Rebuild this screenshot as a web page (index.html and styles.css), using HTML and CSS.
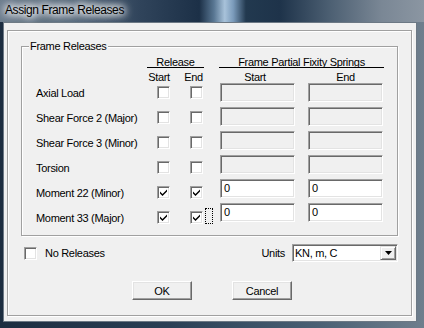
FILE: index.html
```html
<!DOCTYPE html>
<html>
<head>
  <title>Assign Frame Releases</title>
  <link rel="stylesheet" href="styles.css">
</head>
<body>
  <div class="window">
    <div class="titlebar"><span class="title">Assign Frame Releases</span></div>
    <div class="client">
      <div class="panel">
        <div class="group">
          <span class="group-label">Frame Releases</span>
          <div class="releases">
            <div class="hdr hdr-release">Release</div>
            <div class="subhdr"><span class="sub-start">Start</span><span class="sub-end">End</span></div>
            <div class="row"><span class="lbl">Axial Load</span><span class="cb"></span><span class="cb"></span></div>
            <div class="row"><span class="lbl">Shear Force 2 (Major)</span><span class="cb"></span><span class="cb"></span></div>
            <div class="row"><span class="lbl">Shear Force 3 (Minor)</span><span class="cb"></span><span class="cb"></span></div>
            <div class="row"><span class="lbl">Torsion</span><span class="cb"></span><span class="cb"></span></div>
            <div class="row">
              <span class="lbl">Moment 22 (Minor)</span>
              <span class="cb"><svg width="7" height="7" viewBox="0 0 7 7"><path d="M0 2.5 L2.5 5 L7 0.5 L7 2.5 L2.5 7 L0 4.5 Z" fill="#000"/></svg></span>
              <span class="cb"><svg width="7" height="7" viewBox="0 0 7 7"><path d="M0 2.5 L2.5 5 L7 0.5 L7 2.5 L2.5 7 L0 4.5 Z" fill="#000"/></svg></span>
            </div>
            <div class="row">
              <span class="lbl">Moment 33 (Major)</span>
              <span class="cb"><svg width="7" height="7" viewBox="0 0 7 7"><path d="M0 2.5 L2.5 5 L7 0.5 L7 2.5 L2.5 7 L0 4.5 Z" fill="#000"/></svg></span>
              <span class="cb-wrap">
                <span class="cb"><svg width="7" height="7" viewBox="0 0 7 7"><path d="M0 2.5 L2.5 5 L7 0.5 L7 2.5 L2.5 7 L0 4.5 Z" fill="#000"/></svg></span>
                <span class="focus"></span>
              </span>
            </div>
          </div>
          <div class="springs">
            <div class="hdr hdr-springs">Frame Partial Fixity Springs</div>
            <div class="subhdr"><span class="sub-s1">Start</span><span class="sub-s2">End</span></div>
            <div class="boxes">
              <span class="tb"></span><span class="tb"></span>
              <span class="tb"></span><span class="tb"></span>
              <span class="tb"></span><span class="tb"></span>
              <span class="tb"></span><span class="tb"></span>
              <span class="tb on">0</span><span class="tb on">0</span>
              <span class="tb on">0</span><span class="tb on">0</span>
            </div>
          </div>
        </div>
        <div class="options">
          <span class="cb"></span>
          <span class="opt-label">No Releases</span>
          <span class="units">Units</span>
          <div class="combo">
            <span class="combo-text">KN, m, C</span>
            <span class="combo-btn"><svg width="7" height="4" viewBox="0 0 7 4"><path d="M0 0 H7 L3.5 4 Z" fill="#000"/></svg></span>
          </div>
        </div>
        <div class="actions">
          <button class="btn">OK</button>
          <button class="btn">Cancel</button>
        </div>
      </div>
    </div>
  </div>
</body>
</html>
```

FILE: styles.css
```css
body {
  margin: 0;
  width: 424px;
  height: 328px;
  overflow: hidden;
  font-family: 'Liberation Sans', Arial, sans-serif;
  font-size: 11px;
  letter-spacing: -0.3px;
  color: #000;
}
.window {
  height: 328px;
  background: linear-gradient(90deg, #1c2d40 0%, #2a3f55 40%, #4a6074 75%, #6f7e8d 100%);
}
.titlebar {
  height: 22px;
  background: linear-gradient(90deg, #6d7d8e 0%, #56687b 18%, #30445b 33%, #1c3047 47%, #5a7894 50.5%, #a8c2da 53%, #7b9bbb 55%, #22394f 58%, #1e334a 66%, #4d6073 78%, #7a8795 90%, #8b96a2 100%);
}
.title {
  display: inline-block;
  padding: 3px 0 0 5px;
  font-size: 12px;
  letter-spacing: -0.4px;
  line-height: 14px;
  text-shadow: 0 0 6px #fff, 0 0 8px #fff, 0 0 10px #fff, 0 0 12px #fff;
}
.client {
  margin-left: 3px;
  width: 414px;
  height: 300px;
  box-sizing: border-box;
  border: 1px solid #6c7884;
  background: #f0f0f0;
}
.panel {
  margin: 7px 0 0 3px;
  width: 405px;
  height: 286px;
  box-sizing: border-box;
  border: 1px solid #a0a0a0;
  box-shadow: 1px 1px 0 #fff, inset 1px 1px 0 #fff;
}
.group {
  position: relative;
  display: flex;
  margin: 15px 0 0 13px;
  width: 377px;
  height: 190px;
  box-sizing: border-box;
  border: 1px solid #a0a0a0;
  box-shadow: 1px 1px 0 #fff, inset 1px 1px 0 #fff;
}
.group-label {
  position: absolute;
  top: -7px;
  left: 7px;
  padding: 0 1px;
  line-height: 13px;
  background: #f0f0f0;
}
.releases {
  width: 198px;
  box-sizing: border-box;
  padding: 9px 0 0 14px;
}
.springs {
  padding-top: 9px;
}
.hdr {
  height: 11px;
  line-height: 12px;
  border-bottom: 1px solid #000;
  text-align: center;
}
.hdr-release { margin-left: 111px; width: 57px; }
.hdr-springs { margin-left: -1px; width: 165px; }
.subhdr {
  display: flex;
  margin-top: 3px;
  height: 9px;
  line-height: 13px;
}
.subhdr span { text-align: center; }
.sub-start { margin-left: 111px; width: 24px; }
.sub-end { margin-left: 12px; width: 21px; }
.sub-s1 { width: 70px; }
.sub-s2 { margin-left: 18px; width: 75px; }
.row {
  display: grid;
  grid-template-columns: 121px 33px 30px;
  align-items: center;
  height: 25px;
}
.cb {
  display: flex;
  align-items: center;
  justify-content: center;
  width: 13px;
  height: 13px;
  box-sizing: border-box;
  border: 1px solid;
  border-color: #a0a0a0 #fff #fff #a0a0a0;
  box-shadow: inset 1px 1px 0 #696969, inset -1px -1px 0 #e3e3e3;
  background: #fff;
}
.cb svg { display: block; }
.cb-wrap {
  display: flex;
  align-items: flex-start;
  height: 13px;
}
.focus {
  width: 8px;
  height: 16px;
  margin: -3px 0 0 2px;
  box-sizing: border-box;
  border: 1px dotted #000;
}
.boxes {
  display: grid;
  grid-template-columns: 75px 75px;
  column-gap: 13px;
  row-gap: 5px;
  margin-top: 3px;
}
.tb {
  height: 19px;
  box-sizing: border-box;
  padding: 0 3px;
  line-height: 17px;
  border: 1px solid;
  border-color: #a0a0a0 #fff #fff #a0a0a0;
  box-shadow: inset 1px 1px 0 #696969, inset -1px -1px 0 #e3e3e3;
  background: #f0f0f0;
}
.tb.on { background: #fff; }
.options {
  display: flex;
  align-items: center;
  margin-top: 7px;
  height: 20px;
  padding: 0 13px 0 16px;
}
.opt-label { margin-left: 8px; }
.units { margin-left: auto; }
.combo {
  display: flex;
  align-items: center;
  margin-left: 7px;
  width: 106px;
  height: 18px;
  box-sizing: border-box;
  padding: 1px;
  border: 1px solid;
  border-color: #a0a0a0 #fff #fff #a0a0a0;
  box-shadow: inset 1px 1px 0 #696969, inset -1px -1px 0 #e3e3e3;
  background: #fff;
}
.combo-text {
  flex: 1;
  padding-left: 1px;
  line-height: 14px;
}
.combo-btn {
  display: flex;
  align-items: center;
  justify-content: center;
  width: 16px;
  height: 14px;
  box-sizing: border-box;
  border: 1px solid;
  border-color: #e3e3e3 #696969 #696969 #e3e3e3;
  box-shadow: inset 1px 1px 0 #fff, inset -1px -1px 0 #a0a0a0;
  background: #f0f0f0;
}
.actions {
  display: flex;
  gap: 40px;
  margin-top: 18px;
  padding-left: 124px;
}
.btn {
  width: 60px;
  height: 19px;
  padding: 0;
  box-sizing: border-box;
  border: 1px solid;
  border-color: #fff #696969 #696969 #fff;
  box-shadow: inset -1px -1px 0 #a0a0a0, inset 1px 1px 0 #e3e3e3;
  background: #f0f0f0;
  font-family: 'Liberation Sans', Arial, sans-serif;
  font-size: 11px;
  letter-spacing: -0.3px;
  color: #000;
}
```
